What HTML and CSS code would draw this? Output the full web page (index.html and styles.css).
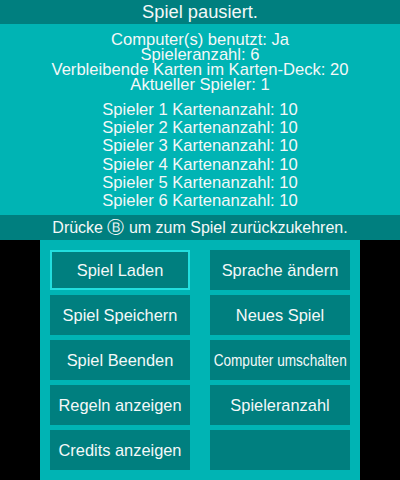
FILE: index.html
```html
<!DOCTYPE html>
<html lang="de">
<head>
<meta charset="utf-8">
<title>Spiel pausiert</title>
<link rel="stylesheet" href="styles.css">
</head>
<body>
<div class="top">
  <div class="titlebar">Spiel pausiert.</div>
  <div class="info">
    <div>Computer(s) benutzt: Ja</div>
    <div>Spieleranzahl: 6</div>
    <div>Verbleibende Karten im Karten-Deck: 20</div>
    <div>Aktueller Spieler: 1</div>
  </div>
  <div class="players">
    <div>Spieler 1 Kartenanzahl: 10</div>
    <div>Spieler 2 Kartenanzahl: 10</div>
    <div>Spieler 3 Kartenanzahl: 10</div>
    <div>Spieler 4 Kartenanzahl: 10</div>
    <div>Spieler 5 Kartenanzahl: 10</div>
    <div>Spieler 6 Kartenanzahl: 10</div>
  </div>
  <div class="hint">Drücke <span class="btnb">Ⓑ</span> um zum Spiel zurückzukehren.</div>
</div>
<div class="bottom">
  <div class="panel">
    <div class="btn selected">Spiel Laden</div>
    <div class="btn">Sprache ändern</div>
    <div class="btn">Spiel Speichern</div>
    <div class="btn">Neues Spiel</div>
    <div class="btn">Spiel Beenden</div>
    <div class="btn"><span class="narrow">Computer umschalten</span></div>
    <div class="btn">Regeln anzeigen</div>
    <div class="btn">Spieleranzahl</div>
    <div class="btn">Credits anzeigen</div>
    <div class="btn"></div>
  </div>
</div>
</body>
</html>
```

FILE: styles.css
```css
html, body {
  margin: 0;
  padding: 0;
  background: #000;
}
body {
  width: 400px;
  height: 480px;
  overflow: hidden;
  font-family: "Liberation Sans", Arial, sans-serif;
  color: #f4f8f8;
}
.top {
  width: 400px;
  height: 240px;
  background: #00b4b4;
  display: flex;
  flex-direction: column;
  text-align: center;
}
.titlebar {
  height: 24px;
  line-height: 24px;
  font-size: 18.3px;
  background: #007f7f;
}
.info {
  margin-top: 8px;
  font-size: 16.6px;
  line-height: 15px;
}
.players {
  margin-top: 9px;
  font-size: 16.6px;
  line-height: 18.2px;
}
.hint {
  margin-top: auto;
  height: 25px;
  line-height: 25px;
  font-size: 16px;
  background: #007f7f;
}
.btnb {
  font-family: "DejaVu Sans", sans-serif;
  font-size: 16.5px;
}
.bottom {
  height: 240px;
  display: flex;
  justify-content: center;
}
.panel {
  width: 320px;
  height: 240px;
  box-sizing: border-box;
  background: #00b4b4;
  padding: 10px;
  display: grid;
  grid-template-columns: 140px 140px;
  grid-auto-rows: 40px;
  column-gap: 20px;
  row-gap: 5px;
}
.btn {
  background: #007f7f;
  display: flex;
  align-items: center;
  justify-content: center;
  font-size: 16.4px;
  white-space: nowrap;
  box-sizing: border-box;
}
.btn.selected {
  border: 2px solid #22dede;
}
.narrow {
  display: inline-block;
  transform: scaleX(0.83);
}
```
